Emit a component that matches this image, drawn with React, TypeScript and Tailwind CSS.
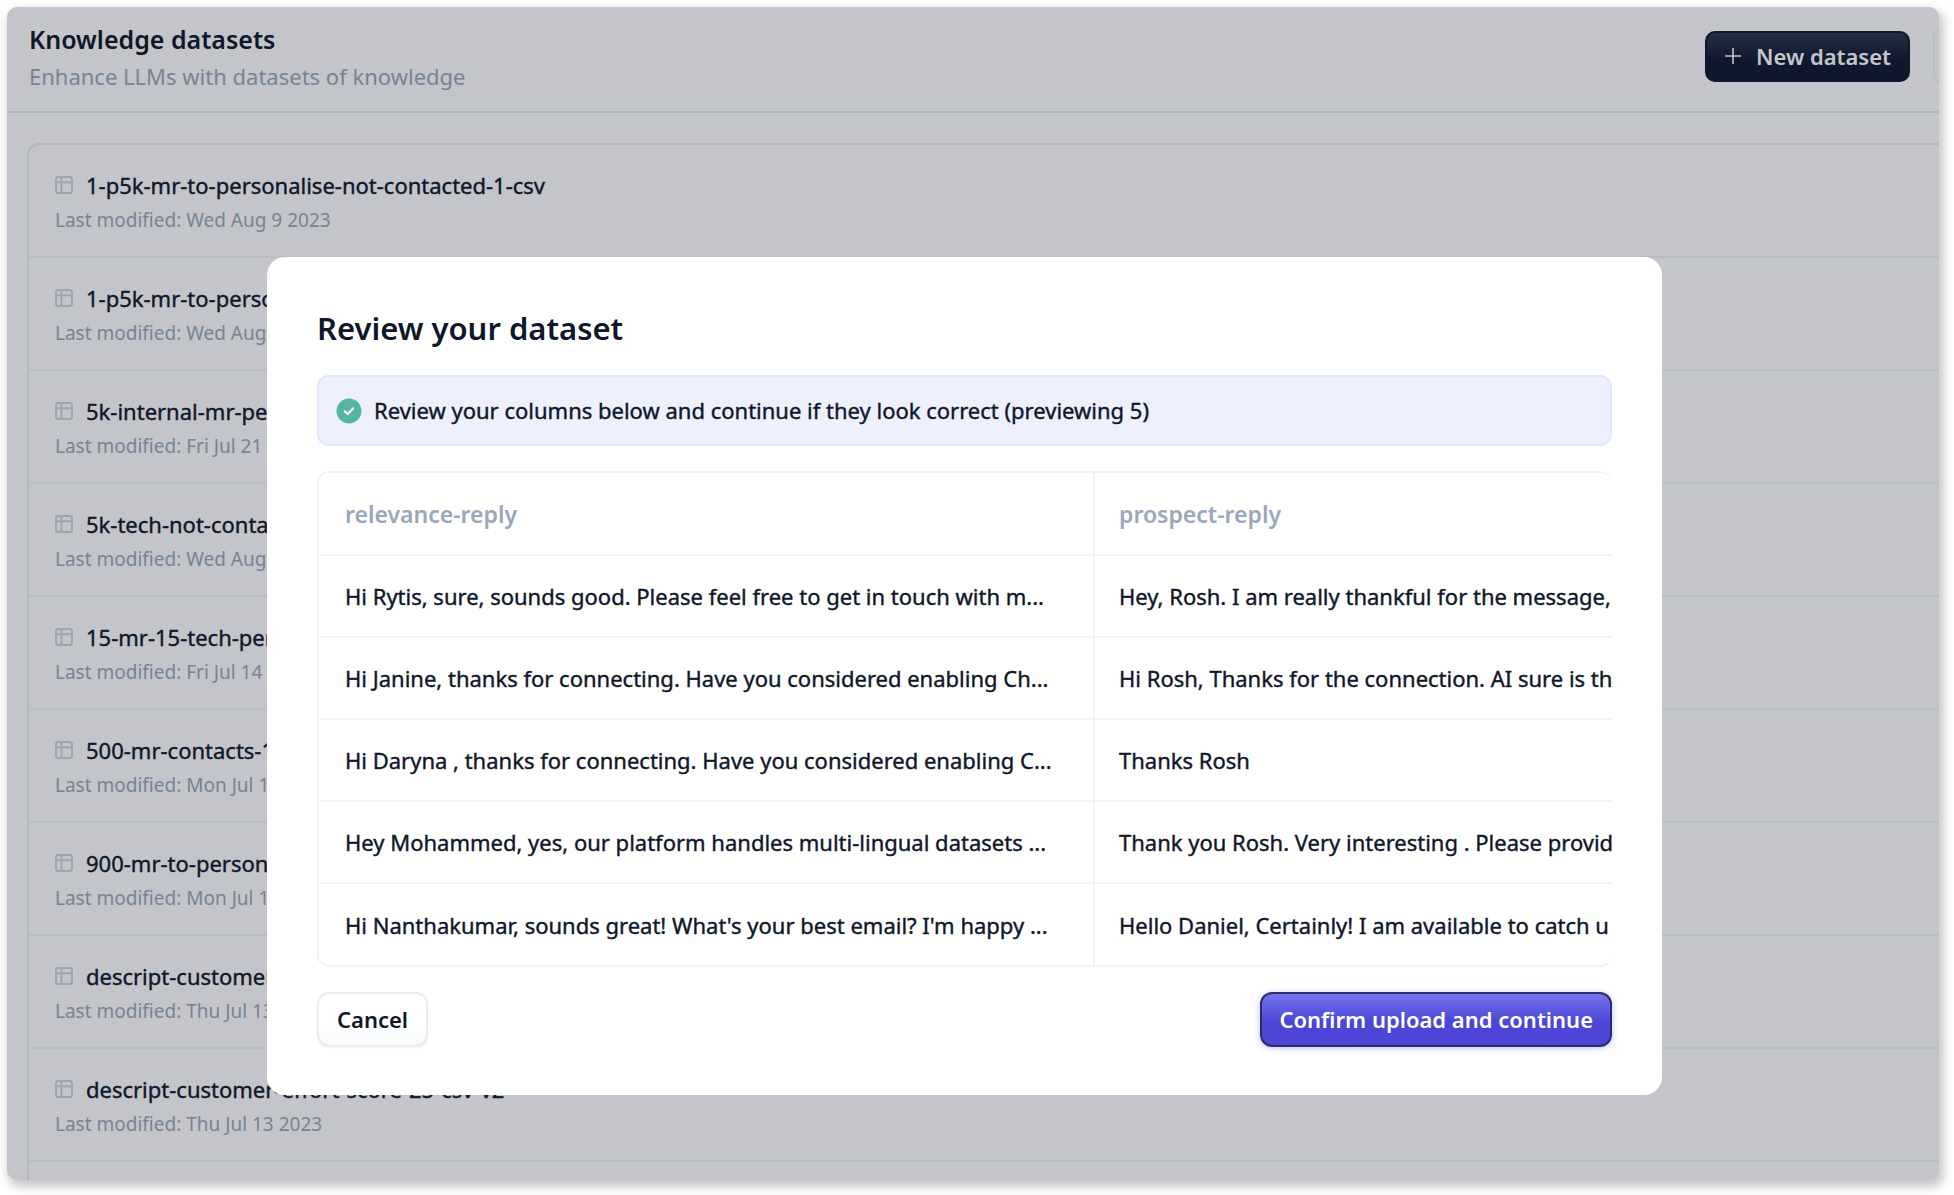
import React from "react";

const datasets = [
  ["1-p5k-mr-to-personalise-not-contacted-1-csv", "Wed Aug 9 2023"],
  ["1-p5k-mr-to-personalise-not-contacted-csv", "Wed Aug 9 2023"],
  ["5k-internal-mr-personalise", "Fri Jul 21 2023"],
  ["5k-tech-not-contacted", "Wed Aug 9 2023"],
  ["15-mr-15-tech-personalise", "Fri Jul 14 2023"],
  ["500-mr-contacts-1", "Mon Jul 17 2023"],
  ["900-mr-to-personalise", "Mon Jul 17 2023"],
  ["descript-customer-effort", "Thu Jul 13 2023"],
  ["descript-customer-effort-score-25-csv-v2", "Thu Jul 13 2023"],
];

const replies = [
  ["Hi Rytis, sure, sounds good. Please feel free to get in touch with m...", "Hey, Rosh. I am really thankful for the message,"],
  ["Hi Janine, thanks for connecting. Have you considered enabling Ch...", "Hi Rosh, Thanks for the connection. AI sure is th"],
  ["Hi Daryna , thanks for connecting. Have you considered enabling C...", "Thanks Rosh"],
  ["Hey Mohammed, yes, our platform handles multi-lingual datasets ...", "Thank you Rosh. Very interesting . Please provid"],
  ["Hi Nanthakumar, sounds great! What's your best email? I'm happy ...", "Hello Daniel, Certainly! I am available to catch u"],
];

function TableIcon() {
  return (
    <svg viewBox="0 0 18 18" className="size-[18px] shrink-0 text-[#cdd5e0]" fill="none" stroke="currentColor" strokeWidth="2" aria-hidden="true">
      <rect x="1" y="1" width="16" height="16" rx="2.5" />
      <path d="M1 6.3h16M6.5 1v16" />
    </svg>
  );
}

function DatasetRow({ name, modified }: { name: string; modified: string }) {
  return (
    <li className="flex h-[113px] flex-col justify-center gap-1 border-b-2 border-[#f1f3f9] px-[26px] pt-1">
      <a href="#" className="flex items-center gap-[13px]">
        <TableIcon />
        <span className="text-[22px] leading-[30px] whitespace-nowrap text-slate-900 [-webkit-text-stroke:0.4px]">{name}</span>
      </a>
      <p className="text-[19px] leading-8 whitespace-nowrap text-[#9aa7ba]">Last modified: {modified}</p>
    </li>
  );
}

function ReviewDialog() {
  return (
    <section role="dialog" aria-modal="true" aria-labelledby="review-title" className="w-full rounded-[18px] bg-white px-[50px] py-12">
      <h2 id="review-title" className="text-[31px] leading-[46px] font-semibold text-slate-900">Review your dataset</h2>
      <div className="mt-6 flex h-[71px] items-center gap-3 rounded-xl border-2 border-indigo-100 bg-[#eef0fe] px-[17px]">
        <svg viewBox="0 0 26 26" className="size-[26px] shrink-0" fill="none" aria-hidden="true">
          <circle cx="13" cy="13" r="12.5" fill="#56b4a2" />
          <path d="M8.8 13.2l2.9 2.8 5.4-5.6" stroke="#fff" strokeWidth="2.2" strokeLinecap="round" strokeLinejoin="round" />
        </svg>
        <p className="text-[22px] whitespace-nowrap text-slate-900 [-webkit-text-stroke:0.4px]">Review your columns below and continue if they look correct (previewing 5)</p>
      </div>
      <div className="mt-[25px] overflow-hidden rounded-xl border-y-2 border-l-2 border-slate-100">
        <table className="w-[1550px] table-fixed border-collapse text-left text-[22px] leading-8 text-slate-900">
          <thead>
            <tr className="h-[82px] text-[23px] text-[#9aa7bc]">
              <th scope="col" className="border-r-2 border-slate-100 px-[26px] font-semibold">relevance-reply</th>
              <th scope="col" className="px-6 font-semibold">prospect-reply</th>
            </tr>
          </thead>
          <tbody className="[-webkit-text-stroke:0.4px]">
            {replies.map(([reply, prospect]) => (
              <tr key={reply} className="h-[82px] border-t-2 border-slate-100">
                <td className="border-r-2 border-slate-100 px-[26px] whitespace-nowrap">{reply}</td>
                <td className="px-6 whitespace-nowrap">{prospect}</td>
              </tr>
            ))}
          </tbody>
        </table>
      </div>
      <div className="mt-[25px] flex items-center justify-between text-[22px] font-semibold">
        <button type="button" className="h-[55px] rounded-xl border-2 border-slate-200/80 bg-linear-to-b from-white from-60% to-slate-50 px-[18px] text-slate-900 shadow-xs">Cancel</button>
        <button type="button" className="h-[55px] rounded-xl border-2 border-[#2d2b6b] bg-linear-to-b from-[#7674ea] to-[#4b45d8] to-55% px-[17px] text-white shadow-[0_1px_6px_rgba(79,70,229,0.35)]">Confirm upload and continue</button>
      </div>
    </section>
  );
}

export default function App() {
  return (
    <div className="h-screen overflow-hidden bg-white pt-[7px] pr-[15px] pb-[15px] pl-[7px] font-['Noto_Sans',sans-serif]">
      <div className="relative h-full overflow-hidden rounded-[10px] bg-white shadow-[3px_5px_10px_2px_rgba(0,0,0,0.22)]">
        <header className="flex h-[106px] items-center border-b-2 border-slate-200 pb-1.5 pl-[22px]">
          <div className="min-w-0 flex-1 pt-1">
            <h1 className="text-[25px] leading-9 font-semibold text-slate-900">Knowledge datasets</h1>
            <p className="text-[22px] leading-[38px] text-[#9aa7ba]">Enhance LLMs with datasets of knowledge</p>
          </div>
          <button type="button" className="flex h-[51px] items-center gap-3.5 rounded-[10px] border-2 border-slate-900 bg-linear-to-b from-[#2c364d] to-slate-900 to-60% px-[17px] text-[22px] font-semibold text-white">
            <svg viewBox="0 0 18 18" className="size-[18px]" stroke="currentColor" strokeWidth="1.6" aria-hidden="true">
              <path d="M9 1v16M1 9h16" />
            </svg>
            New dataset
          </button>
          <div className="ml-[23px] h-[52px] w-1.5 rounded-l-[10px] border-y-2 border-l-2 border-slate-100" />
        </header>
        <ul className="mt-[30px] ml-5 rounded-tl-xl border-t-2 border-l-2 border-[#eaecf0]">
          {datasets.map(([name, modified]) => (
            <DatasetRow key={name} name={name} modified={modified} />
          ))}
          <li className="h-[113px]" />
        </ul>
        <div className="absolute inset-0 flex items-start bg-slate-900/25 pt-[250px] pr-[277px] pl-[260px]">
          <ReviewDialog />
        </div>
      </div>
    </div>
  );
}
